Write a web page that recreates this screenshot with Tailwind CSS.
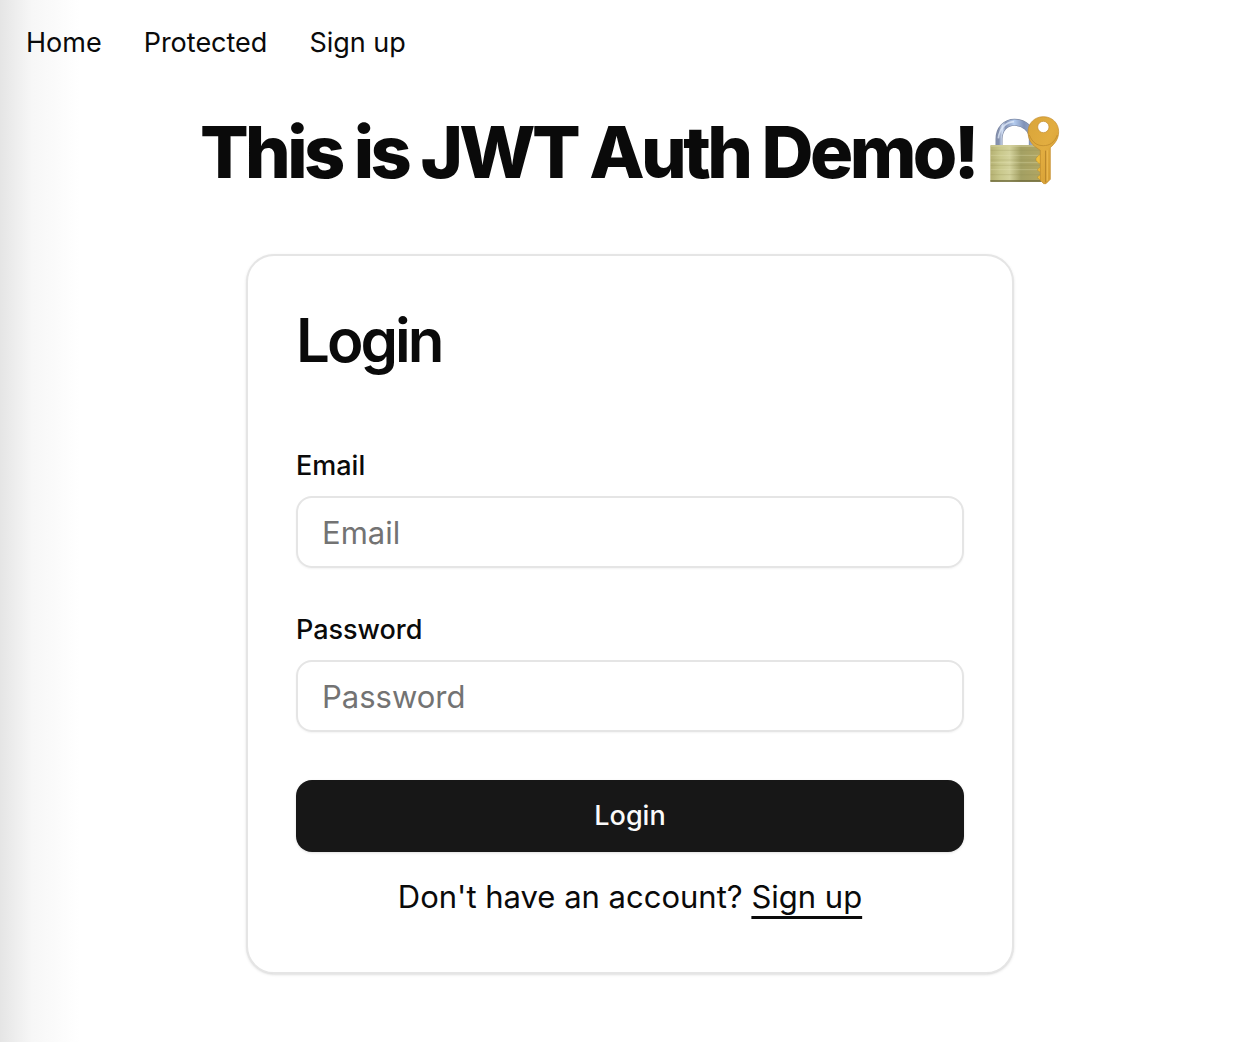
<!DOCTYPE html>
<html lang="en">
<head>
<meta charset="utf-8">
<meta name="viewport" content="width=device-width, initial-scale=1">
<title>JWT Auth Demo</title>
<script src="https://cdn.jsdelivr.net/npm/@tailwindcss/browser@4"></script>
</head>
<body class="min-h-screen bg-white bg-linear-to-r from-[#e5e5e5] via-[#f7f7f7] via-[32px] to-white to-[80px] font-['Inter',sans-serif] text-neutral-950">
<nav class="flex gap-[42px] px-[26px] pt-[25px] text-[27px] leading-9">
<a href="#">Home</a><a href="#">Protected</a><a href="#">Sign up</a>
</nav>
<main class="flex flex-col items-center pl-2">
<h1 class="mt-[51px] flex items-center gap-3 text-[72px] leading-20 font-extrabold tracking-tighter">This is JWT Auth Demo!
<svg class="size-[72px]" viewBox="54 48 216 216" role="img" aria-label="Locked with key">
<defs>
<linearGradient id="brass" x1="0" x2="1" y1="0" y2="0"><stop offset="0" stop-color="#b5b172"/><stop offset=".2" stop-color="#c9c88c"/><stop offset=".38" stop-color="#d3d29c"/><stop offset=".6" stop-color="#a3a063"/><stop offset="1" stop-color="#b1a663"/></linearGradient>
<linearGradient id="steel" x1="0" x2="1" y1="0" y2="0"><stop offset="0" stop-color="#8490ad"/><stop offset=".1" stop-color="#d3e0f6"/><stop offset=".2" stop-color="#8291b4"/><stop offset=".45" stop-color="#b5cdf0"/><stop offset=".75" stop-color="#7e91b8"/><stop offset="1" stop-color="#9aabc9"/></linearGradient>
<linearGradient id="gold" x1="0" x2="1" y1="0" y2="1"><stop offset="0" stop-color="#d9a539"/><stop offset=".5" stop-color="#e2ad40"/><stop offset="1" stop-color="#d29a2f"/></linearGradient>
</defs>
<path d="M87 140V117C87 87 107 67 134 67S187 87 187 117V140" fill="none" stroke="#7c88a3" stroke-width="21"/>
<path d="M87 140V117C87 87 107 67 134 67S187 87 187 117V140" fill="none" stroke="url(#steel)" stroke-width="17"/>
<path d="M85 115C88 86 107 66 132 65" fill="none" stroke="#e2ecfb" stroke-width="5" opacity=".75"/>
<rect x="61" y="135" width="153" height="110" rx="3" fill="url(#brass)"/>
<path d="M62 138H212" stroke="#d4d0a0" stroke-width="3"/>
<path d="M62 151H212M62 180H212M62 196H212M62 224H212" stroke="#8e8b50" stroke-width="2" opacity=".35"/>
<path d="M62 166H212M62 188H212M62 209H212" stroke="#ebeabd" stroke-width="2" opacity=".45"/>
<path d="M61 243H214" stroke="#6d6938" stroke-width="4"/>
<path d="M212 164C202 164 205 171 198 174V182C204 184 202 191 212 191ZM212 202C207 202 207 206 203 207V212C208 212 207 216 212 216ZM212 225C207 225 207 229 203 230V235C208 235 207 240 212 240Z" fill="#f0bf3d" stroke="#a67c24"/>
<path fill-rule="evenodd" d="M220 50C247 50 266 70 266 95C266 118 253 132 241 143V238L228 251L221 251L211 241V151L198 142C183 132 174 115 174 95C174 70 194 50 220 50ZM220 64A17 17 0 1 0 220 98A17 17 0 1 0 220 64Z" fill="url(#gold)" stroke="#c18a29" stroke-width="2"/>
<path d="M178 105C187 128 201 137 220 137S253 128 262 105" fill="none" stroke="#b88528" stroke-width="2"/>
<path d="M227 152V247" stroke="#b3822a" stroke-width="3"/>
<path d="M232 151V242" stroke="#e9b64c" stroke-width="4"/>
</svg></h1>
<section class="mt-[62px] w-full max-w-[768px] rounded-[28px] border-2 border-neutral-200 bg-white p-12 shadow-sm">
<h2 class="text-[60px] leading-[72px] font-semibold tracking-tighter">Login</h2>
<form class="mt-[76px] flex flex-col">
<label for="email" class="text-[27px] leading-7 font-medium">Email</label>
<input id="email" type="email" placeholder="Email" class="mt-4 h-[72px] rounded-2xl border-2 border-neutral-200 px-6 text-[31px] shadow-xs placeholder:text-neutral-500">
<label for="password" class="mt-12 text-[27px] leading-7 font-medium">Password</label>
<input id="password" type="password" placeholder="Password" class="mt-4 h-[72px] rounded-2xl border-2 border-neutral-200 px-6 text-[31px] shadow-xs placeholder:text-neutral-500">
<button type="button" class="mt-12 h-[72px] rounded-2xl bg-neutral-900 text-[27px] font-medium text-neutral-50 shadow-sm">Login</button>
</form>
<p class="mt-5 pb-0.5 text-center text-[31px] leading-[50px]">Don't have an account? <a href="#" class="underline decoration-3 underline-offset-8">Sign up</a></p>
</section>
</main>
</body>
</html>
